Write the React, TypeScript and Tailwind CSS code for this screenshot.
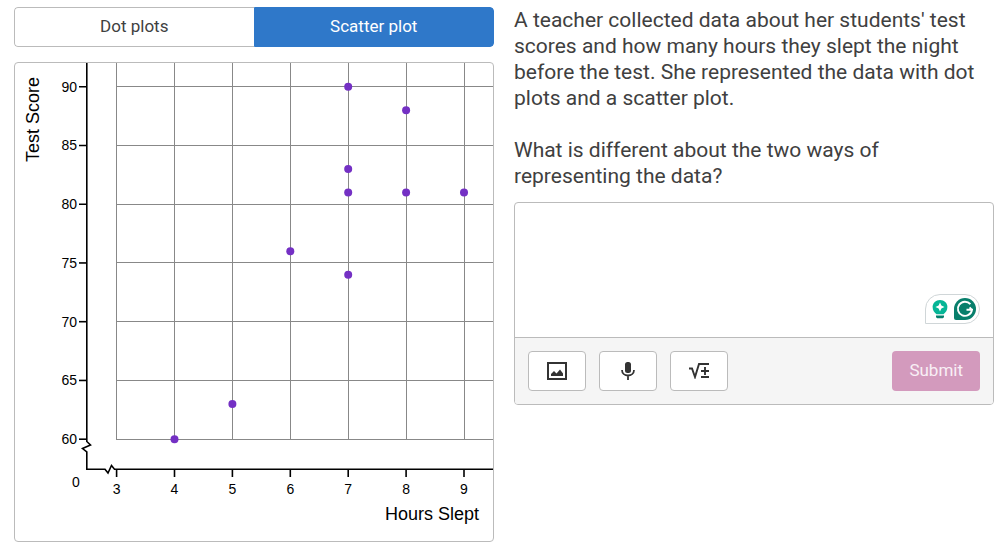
import { useState } from "react";

const points = [
  { hours: 4, score: 60 },
  { hours: 5, score: 63 },
  { hours: 6, score: 76 },
  { hours: 7, score: 74 },
  { hours: 7, score: 81 },
  { hours: 7, score: 83 },
  { hours: 7, score: 90 },
  { hours: 8, score: 81 },
  { hours: 8, score: 88 },
  { hours: 9, score: 81 },
];

const hourTicks = [3, 4, 5, 6, 7, 8, 9];
const scoreTicks = [60, 65, 70, 75, 80, 85, 90];

const toX = (hours: number) => 101.6 + (hours - 3) * 57.9;
const toY = (score: number) => 376.2 - (score - 60) * 11.75;

function ScatterPlot() {
  return (
    <svg
      viewBox="0 0 478 478"
      className="block w-full font-['Liberation_Sans',Arial,sans-serif]"
      role="img"
      aria-label="Scatter plot of test score against hours slept"
    >
      <g stroke="#888" strokeWidth="1" shapeRendering="crispEdges">
        {hourTicks.map((hours) => (
          <line key={hours} x1={toX(hours)} x2={toX(hours)} y1="0" y2="376" />
        ))}
        {scoreTicks.map((score) => (
          <line key={score} x1="101" x2="478" y1={toY(score)} y2={toY(score)} />
        ))}
      </g>

      {/* axes, with a break near the origin on each */}
      <g fill="none" stroke="#000" strokeWidth="1.6">
        <path d="M71.8 0V378.5L75.5 382L67.5 385.5L71.8 389V406.2H90L93 410L96.5 402.5L99.5 406.2H478" />
        {hourTicks.map((hours) => (
          <line key={hours} x1={toX(hours)} x2={toX(hours)} y1="406" y2="414" />
        ))}
        {scoreTicks.map((score) => (
          <line key={score} x1="64" x2="72" y1={toY(score)} y2={toY(score)} />
        ))}
      </g>

      <g fontSize="14" fill="#000">
        {hourTicks.map((hours) => (
          <text key={hours} x={toX(hours)} y="431" textAnchor="middle">
            {hours}
          </text>
        ))}
        {scoreTicks.map((score) => (
          <text key={score} x="62" y={toY(score) + 5} textAnchor="end">
            {score}
          </text>
        ))}
        <text x="61" y="424" textAnchor="middle">0</text>
      </g>

      <g fontSize="18" fill="#000">
        <text x="464" y="457" textAnchor="end">Hours Slept</text>
        <text transform="translate(24 14) rotate(-90)" textAnchor="end">Test Score</text>
      </g>

      <g fill="#7430c4">
        {points.map((p) => (
          <circle key={`${p.hours}-${p.score}`} cx={toX(p.hours)} cy={toY(p.score)} r="4" />
        ))}
      </g>
    </svg>
  );
}

function ImageIcon() {
  return (
    <svg width="20" height="18" viewBox="0 0 20 18">
      <rect x="1" y="1" width="18" height="16" fill="none" stroke="#333" strokeWidth="2" />
      <path d="M4 14V12L7 9L9.5 11.5L13 7.5L16 11.5V14Z" fill="#333" />
    </svg>
  );
}

function MicIcon() {
  return (
    <svg width="14" height="18" viewBox="0 0 14 18">
      <rect x="4" y="0" width="6" height="11" rx="2.5" fill="#333" />
      <path d="M1 8C1 15.3 13 15.3 13 8M7 13.5V18" fill="none" stroke="#333" strokeWidth="1.8" />
    </svg>
  );
}

function MathIcon() {
  return (
    <svg width="20" height="16" viewBox="0 0 20 16">
      <path
        d="M0 5.5H3L6 14L10 1H20M12 8H20M16 4V12M12 14H20"
        fill="none"
        stroke="#333"
        strokeWidth="1.9"
      />
    </svg>
  );
}

function WritingHelper() {
  return (
    <div className="absolute right-[13px] bottom-[13px] flex h-[30px] items-center gap-[5px] rounded-full rounded-bl-none border border-[#d0d6d8] bg-white pr-[3px] pl-[5px]">
      <svg width="18" height="22" viewBox="0 0 18 22">
        <path d="M9 2C4.8 2 1.6 5 1.6 9C1.6 12.2 3.3 14.6 5.5 16.2H12.5C14.7 14.6 16.4 12.2 16.4 9C16.4 5 13.2 2 9 2Z" fill="#05b596" />
        <path d="M9 4.5L10.4 7.6L13.5 9L10.4 10.4L9 13.5L7.6 10.4L4.5 9L7.6 7.6Z" fill="#fff" />
        <path d="M5 17.6H13V18.4C13 19.7 12 20.3 10.8 20.3H7.2C6 20.3 5 19.7 5 18.4Z" fill="#05806d" />
      </svg>
      <svg width="22" height="22" viewBox="0 0 22 22">
        <path d="M11 0A11 11 0 0 1 11 22H2Q0 22 0 20V11A11 11 0 0 1 11 0Z" fill="#087f6c" />
        <path d="M16.4 6.2A7.1 7.1 0 1 0 18 11.8H12.5M18 11.8L15.6 9.4" fill="none" stroke="#fff" strokeWidth="1.9" />
      </svg>
    </div>
  );
}

const tabs = ["Dot plots", "Scatter plot"];

const tools = [
  { label: "Add image", Icon: ImageIcon },
  { label: "Record audio", Icon: MicIcon },
  { label: "Insert math", Icon: MathIcon },
];

export default function App() {
  const [activeTab, setActiveTab] = useState("Scatter plot");
  const [answer, setAnswer] = useState("");

  return (
    <main className="grid grid-cols-2 items-start gap-5 bg-white px-3.5 py-[7px] font-[Roboto,'Open_Sans',sans-serif] text-[#404040]">
      <section>
        <div className="flex h-10 overflow-hidden rounded-sm" role="tablist">
          {tabs.map((tab) => (
            <button
              key={tab}
              type="button"
              role="tab"
              aria-selected={activeTab === tab}
              onClick={() => setActiveTab(tab)}
              className={`flex-1 border text-[17px] first:rounded-l-sm last:rounded-r-sm ${
                activeTab === tab
                  ? "border-[#2f78c9] bg-[#2f78c9] text-white"
                  : "border-[#bbb] bg-white first:border-r-0 last:border-l-0"
              }`}
            >
              {tab}
            </button>
          ))}
        </div>

        <div className="mt-[15px] overflow-hidden rounded-sm border border-[#bbb]">
          <ScatterPlot />
        </div>
      </section>

      <section>
        <div className="space-y-[26px] text-[21px] leading-[26px]">
          <p>
            A teacher collected data about her students' test scores and how many hours they slept
            the night before the test. She represented the data with dot plots and a scatter plot.
          </p>
          <p>What is different about the two ways of representing the data?</p>
        </div>

        <div className="mt-[13px] overflow-hidden rounded-sm border border-[#bbb]">
          <div className="relative">
            <textarea
              aria-label="Your answer"
              value={answer}
              onChange={(e) => setAnswer(e.target.value)}
              className="block h-[134px] w-full resize-none p-3 text-[21px] outline-none"
            />
            <WritingHelper />
          </div>
          <div className="flex items-center gap-[13px] border-t border-[#bbb] bg-[#f5f5f5] p-[13px]">
            {tools.map(({ label, Icon }) => (
              <button
                key={label}
                type="button"
                aria-label={label}
                className="flex h-10 w-[58px] items-center justify-center rounded-sm border border-[#bbb] bg-white"
              >
                <Icon />
              </button>
            ))}
            <button
              type="button"
              className="ml-auto h-10 rounded-sm bg-[#d39abd] px-[17px] text-[17px] text-white/85"
            >
              Submit
            </button>
          </div>
        </div>
      </section>
    </main>
  );
}
